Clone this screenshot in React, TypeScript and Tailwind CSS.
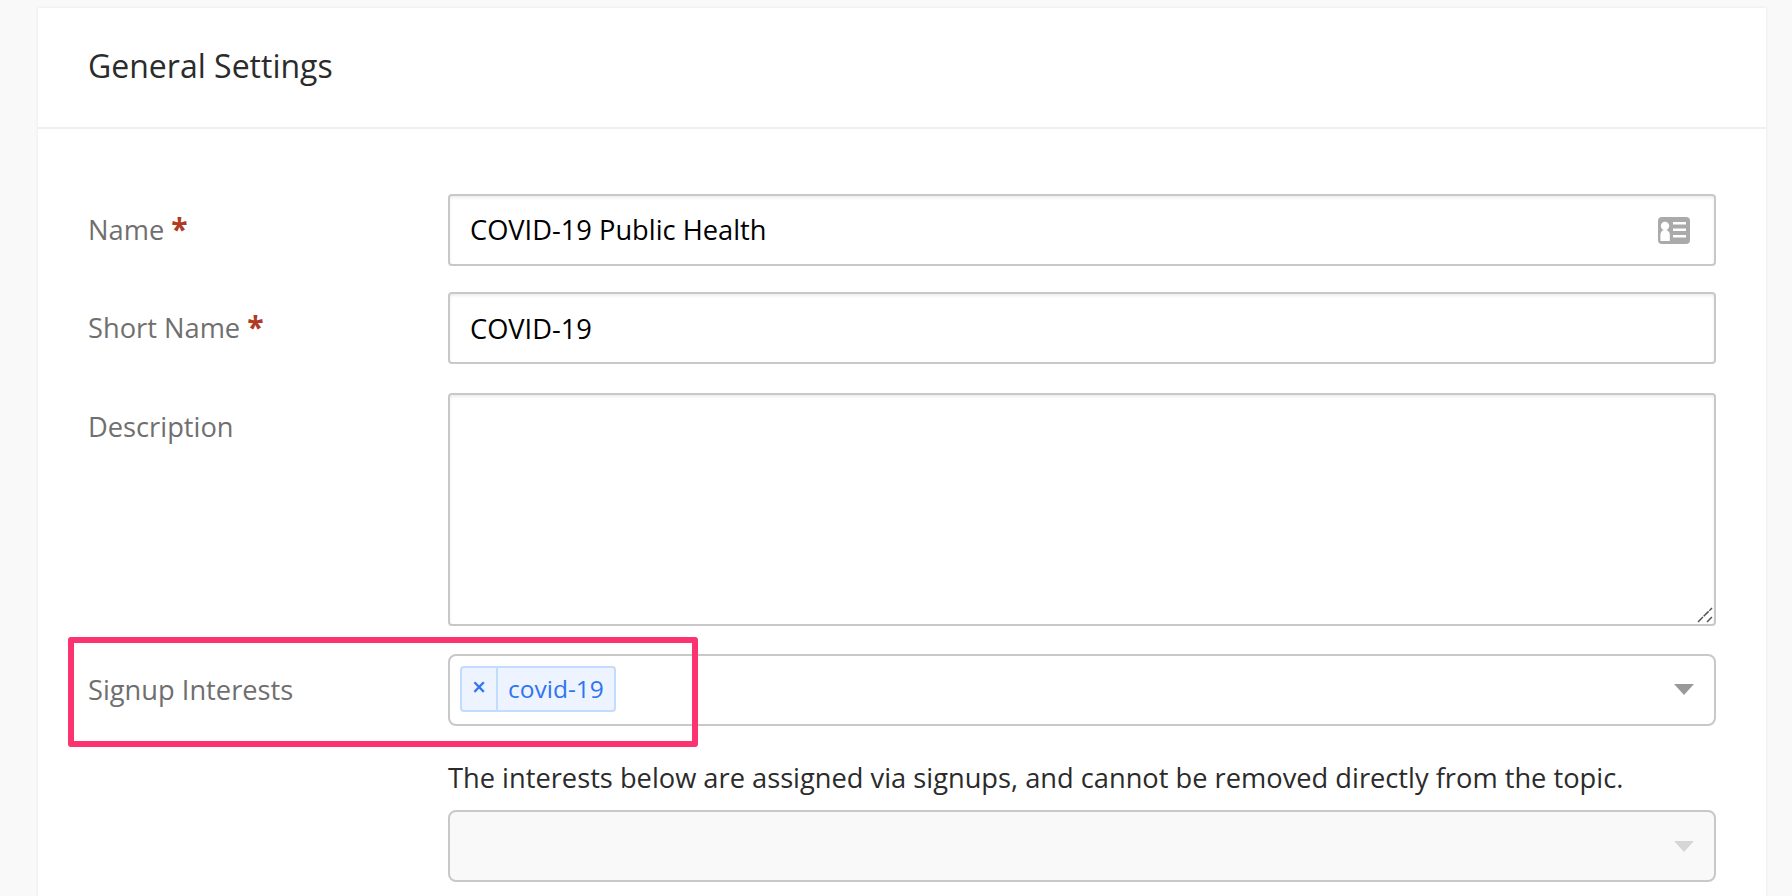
import React from 'react';

const Caret: React.FC<{ className: string }> = ({ className }) => (
  <svg width="20" height="11" viewBox="0 0 20 11" className={className}>
    <path d="M0 0H20L10 11Z" fill="currentColor" />
  </svg>
);

const CardIcon = () => (
  <svg width="32" height="27" viewBox="0 0 32 27" className="shrink-0 mr-[4px] text-[#aaaaaa]">
    <rect width="32" height="27" rx="4" fill="currentColor" />
    <circle cx="7" cy="9" r="4.2" fill="#fff" />
    <path d="M2.4 24V17.5C2.4 14.8 4.4 13 7 13S11.8 14.8 11.8 17.5V24Z" fill="#fff" />
    <path d="M15 5H28V7.4H15ZM15 11.4H28V14H15ZM15 18H28V20.6H15Z" fill="#fff" />
  </svg>
);

const Label: React.FC<{ text: string; required?: boolean; className?: string }> = ({ text, required, className }) => (
  <div className={`w-[360px] shrink-0 text-[#706f6f] ${className ?? ''}`}>
    {text}
    {required && <span className="ml-[7px] text-[30px] leading-[30px] font-bold text-[#b03a22]">*</span>}
  </div>
);

const inputClass =
  'h-[72px] flex-1 flex items-center justify-between px-[20px] border-2 border-[#c8c8c8] rounded-[4px] bg-white text-black shadow-[inset_0_2px_3px_rgba(0,0,0,0.07)]';

const App: React.FC = () => {
  return (
    <div className="relative h-[896px] overflow-hidden bg-[#f9f9f9] pl-[38px] pr-[26px] pt-[8px] font-['Open_Sans',sans-serif] text-[27.25px] leading-[36px]">
      <div className="bg-white shadow-[0_0_3px_rgba(0,0,0,0.08)] h-[900px]">
        <div className="h-[121px] flex items-center px-[50px] pb-[4px] border-b-2 border-[#efefef] text-[32px] text-[#2b2b2b]">
          General Settings
        </div>
        <div className="pt-[65px] pl-[50px] pr-[50px]">
          <div className="flex items-center mb-[26px]">
            <Label text="Name" required />
            <div className={inputClass}>
              <span>COVID-19 Public Health</span>
              <CardIcon />
            </div>
          </div>
          <div className="flex items-center mb-[29px]">
            <Label text="Short Name" required />
            <div className={`${inputClass} pt-[2px]`}>COVID-19</div>
          </div>
          <div className="flex items-start mb-[28px]">
            <Label text="Description" className="pt-[16px]" />
            <div className="relative h-[233px] flex-1 border-2 border-[#c8c8c8] rounded-[4px] bg-white shadow-[inset_0_2px_3px_rgba(0,0,0,0.07)]">
              <svg width="16" height="16" viewBox="0 0 16 16" className="absolute right-[1px] bottom-[1px] text-[#555555]">
                <path d="M1 15L15 1M10 15L15 10" stroke="currentColor" strokeWidth="1.5" strokeDasharray="7 1" fill="none" />
              </svg>
            </div>
          </div>
          <div className="flex items-center">
            <Label text="Signup Interests" />
            <div className="h-[72px] flex-1 flex items-center justify-between pl-[10px] pr-[20px] pb-[2px] border-2 border-[#c8c8c8] rounded-[8px] bg-white">
              <div className="flex h-[46px] items-stretch border-2 border-[#c2dcfb] rounded-[4px] bg-[#edf4ff] text-[#2f74f0] text-[24.5px]">
                <div className="w-[36px] flex items-center justify-center border-r-2 border-[#c2dcfb] font-semibold pb-[4px]">×</div>
                <div className="px-[10px] flex items-center">covid-19</div>
              </div>
              <Caret className="text-[#999999]" />
            </div>
          </div>
          <div className="mt-[34px] ml-[360px] text-[#2b2b2b]">
            The interests below are assigned via signups, and cannot be removed directly from the topic.
          </div>
          <div className="mt-[14px] ml-[360px] h-[72px] flex items-center justify-end pr-[20px] border-2 border-[#c8c8c8] rounded-[8px] bg-[#f9f9f9]">
            <Caret className="text-[#d6d6d6]" />
          </div>
        </div>
      </div>
      {/* annotation box drawn over the form */}
      <div className="absolute left-[68px] top-[637px] w-[630px] h-[110px] border-[6px] border-[#fb3370] rounded-[3px]" />
    </div>
  );
};

export default App;
